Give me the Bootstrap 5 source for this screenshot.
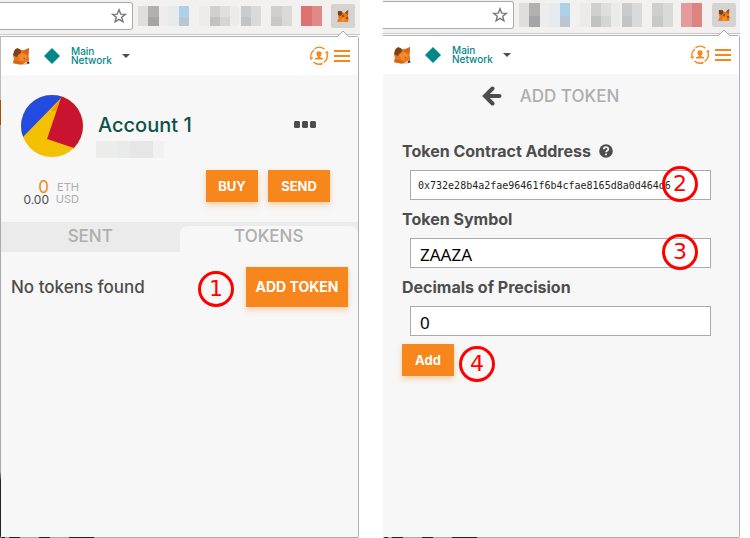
<!DOCTYPE html>
<html lang="en">
<head>
<meta charset="utf-8">
<meta name="viewport" content="width=device-width, initial-scale=1">
<title>Add a token</title>
<link href="https://cdn.jsdelivr.net/npm/bootstrap@5.3.0/dist/css/bootstrap.min.css" rel="stylesheet">
<style>
body{font-family:Inter,"Open Sans",sans-serif;color:#4d4d4d;background:#fff}
button{border:0;padding:0;background:none;color:inherit;flex:none}
svg{display:block;flex:none}
.shots{display:grid;grid-template-columns:360fr 357fr;column-gap:23px;padding-right:10px}
.toolbar{background:#f2f1ef;border-bottom:1px solid #c8c8c8;height:35px;padding:2px 5px 4px 0}
.toolbar.upper{height:34px;padding-top:1px;padding-right:4px}
.urlbox{background:#fff;border:1px solid #aaa;border-left:0;border-radius:0 3px 3px 0;margin-right:5px;padding-right:5px;height:28px}
.urlbox input{border:0;outline:0;background:none;width:100%;min-width:0;height:24px}
.ext{width:24px;height:24px;background:#d4d3d1;border-radius:2px;margin-left:9px}
.upper .ext{margin-left:9px}
.popup{margin:1px 1px 0 0;border:1px solid #b0b0b0;border-radius:0 3px 2px 2px;background:#f7f7f7}
.popup.first{border-left:0;padding-left:1px;border-bottom:0;padding-bottom:1px;
background:linear-gradient(90deg,#222 0 5px,#aaa 5px 9px,#222 9px 20px,#aaa 20px 39px,#222 39px 50px,#aaa 50px 69px,#222 69px 94px,#aaa 94px) bottom/100% 1px no-repeat,
linear-gradient(#bbb 0 63px,#a85000 63px 88px,#aaa 88px 434px,#222 444px) left/1px 100% no-repeat,#f7f7f7}
.popup.second{border-left:0;margin-right:0;border-bottom:0;padding-bottom:1px;background:linear-gradient(90deg,#222 0 5px,#aaa 5px 9px,#222 9px 20px,#aaa 20px 39px,#222 39px 50px,#aaa 50px 69px,#222 69px 94px,#aaa 94px) bottom/100% 1px no-repeat,#f7f7f7}
.notch{position:absolute;top:-7px;right:9px}
.head{height:38px;background:#fff;padding:0 8px 0 11px}
.second .head{padding-left:10px}
.netpick{gap:10px;margin-left:13px}
.swapper{margin-right:5px}
.net{font-size:10px;line-height:9px;color:#038789;text-align:left;font-weight:500}
.acct{padding:20px 28px 16px 20px}
.who{padding-top:18px;margin-left:13px}
.acct-name{font-size:20px;line-height:24px;font-weight:500;color:#0d5249;margin:0;padding-left:2px}
.dots{margin:0 13px 4px auto}
.money{margin-top:12px}
.bal{display:grid;grid-template-columns:28px 25px;column-gap:5px;text-align:right;padding-top:11px;font-size:11px;line-height:12px;color:#aeaeae}
.bal .eth{font-size:17px;color:#f7861c}
.bal .low{line-height:13px}
.bal .usd{color:#4d4d4d;font-size:12px}
.btn.act{--bs-btn-color:#fff;--bs-btn-bg:#f7861c;--bs-btn-hover-color:#fff;--bs-btn-hover-bg:#e87a12;--bs-btn-border-width:0;--bs-btn-border-radius:0;--bs-btn-font-size:13px;--bs-btn-font-weight:700;--bs-btn-padding-x:0;--bs-btn-padding-y:0;--bs-btn-line-height:20px;height:32px;width:52px;box-shadow:0 3px 6px rgba(247,134,28,.36)}
.btn.send{width:62px;margin-left:10px}
.btn.addtok{width:102px;height:40px;margin-left:12px;--bs-btn-font-size:14px}
.tabs{background:#ebebeb;height:30px;font-size:17px;line-height:20px;color:#aeaeae}
.tabs button{flex:1 1 0;font-weight:500;padding-bottom:2px}
.tabs .on{margin-top:4px;background:#f7f7f7;border-radius:8px 8px 0 0;padding-bottom:6px}
.listing{padding:15px 10px;font-size:17px;line-height:20px;font-weight:500}
.step{width:36px;height:36px;border:3px solid #f00;border-radius:50%;color:#f00;font:22px/30px "DejaVu Sans",sans-serif;text-align:center;flex:none}
.step.over{position:absolute;top:-4px;right:13px}
.topline{padding:11px 21px 0 0;gap:18px}
.title{font-size:17px;line-height:22px;color:#aeaeae;font-weight:500;margin:0}
.tokform{padding:32px 28px 0 19px}
.tokform label{font-size:16px;line-height:24px;font-weight:700}
.field{margin:7px 0 7px 8px}
.field input{display:block;width:100%;height:30px;border:1px solid #aaa;border-radius:0;background:#fff;color:#000;padding:3px 9px 0;font:17px "Noto Sans",sans-serif;outline:0}
.field input.mono{font:10px "DejaVu Sans Mono",monospace;padding:0 7px;color:#222}
.submit{gap:5px;padding-top:1px}
.submit .step{margin-top:2px}
</style>
<script src="https://cdn.jsdelivr.net/npm/bootstrap@5.3.0/dist/js/bootstrap.bundle.min.js"></script>
</head>
<body>
<svg width="0" height="0" class="position-absolute" aria-hidden="true">
<symbol id="star" viewBox="0 0 16 16"><path d="M8 1.800l1.700 4.300 4.600.3-3.600 2.900 1.200 4.500L8 11.300l-3.900 2.500 1.200-4.500L1.700 6.400l4.600-.3z" fill="none" stroke="#777" stroke-width="1.400"/></symbol>
<symbol id="fox" viewBox="0 0 18 18"><path d="M1 8l2-6 5 1h4l5-2-.5 7 .5 4v3l-2 2-6 .5-8-1.200L2 13z" fill="#e8761f"/><path d="M1.200 8L2 4l3-3 3.500 1.500.5 3L6 8 5 10 1.500 8.500z" fill="#7a421c"/><path d="M10.500 5L17 1l-.6 7-3-1z" fill="#d5651b"/><path d="M6 8.500l5-2.500 4.500 3-2 4-5 1z" fill="#f58a2a"/><path d="M1.500 13l7 1.500 3 2.500-4 .5-6-1.500z" fill="#d26716"/><path d="M12 16l3.500-1.500L17 16l-1.500 1.500-4 .2z" fill="#d8c5b5"/><path d="M15 15h2.300v1.700H15z" fill="#333"/><path d="M11 11l2.300.4-.6.8z" fill="#5c2d12"/></symbol>
<symbol id="minifox" viewBox="0 0 14 14"><path d="M1.500 4l2-2 3 1.500 2 .5L12 1l.5 1-.5 5 .8 3-1 3-4.500-.2L1 13l1.500-4z" fill="#e87817"/><path d="M2 2l4 .3.5 3L4 7 2 5.500z" fill="#70401d"/><path d="M9 3.500L12 1l-.5 5z" fill="#944b1b"/><path d="M6 6h2v2H6zM10 8h2v2h-2z" fill="#9c5015"/><path d="M7 9l3 1-2 2-3-.5z" fill="#ff9630"/></symbol>
<symbol id="swap" viewBox="0 0 20 20"><g fill="none" stroke="#f7861c" stroke-width="1.400"><path d="M5.500 2.800A8.300 8.300 0 0 1 15.500 3.200"/><path d="M5 4A8.300 8.300 0 0 0 1.900 11.500"/><path d="M18 7.500A8.300 8.300 0 0 1 14.500 16.500"/><path d="M13.500 17.500A8.300 8.300 0 0 1 4.500 16"/></g><path d="M.2 11.500l4-.3-1.700 3zM16 7.500l2-3 2 3z" fill="#f7861c"/><path d="M10 5.300a2.500 2.500 0 0 1 2.500 2.600c0 1.400-.7 2.200-1.400 2.700v.6l2.900 1v1.300H6v-1.300l2.900-1v-.6c-.7-.5-1.400-1.300-1.400-2.700A2.500 2.500 0 0 1 10 5.300z" fill="#f7861c"/></symbol>
<symbol id="bars" viewBox="0 0 16 12"><path d="M0 1h16M0 6h16M0 11h16" stroke="#f7861c" stroke-width="2"/></symbol>
<symbol id="peak" viewBox="0 0 12 8"><path d="M0 8L0 7 6 1l6 6v1z" fill="#fff"/><path d="M0 7L6 1l6 6" fill="none" stroke="#aaa"/></symbol>
<symbol id="blur" viewBox="0 0 184 20" preserveAspectRatio="none"><g shape-rendering="crispEdges"><path fill="#dedede" d="M0 0h10v20H0z"/><path fill="#b2b1b0" d="M10 0h11v11H10z"/><path fill="#a5a5a5" d="M10 11h11v9H10z"/><path fill="#ededed" d="M21 0h9v20h-9z"/><path fill="#e8ebed" d="M30 0h11v20H30z"/><path fill="#aed1eb" d="M41 0h10v11H41z"/><path fill="#b9c7d3" d="M41 11h10v9H41z"/><path fill="#ebebea" d="M61 0h10v20H61z"/><path fill="#d0d0cf" d="M72 0h10v11H72z"/><path fill="#c2c2c2" d="M72 11h10v9H72z"/><path fill="#dfdfde" d="M82 0h10v11H82z"/><path fill="#d5d5d4" d="M82 11h10v9H82z"/><path fill="#ebebea" d="M92 0h9v20h-9z"/><path fill="#c9cbcd" d="M103 0h10v11h-10z"/><path fill="#c2c4c6" d="M103 11h10v9h-10z"/><path fill="#dadada" d="M113 0h10v20h-10z"/><path fill="#cfcfcd" d="M133 0h11v11h-11z"/><path fill="#c8c8c6" d="M133 11h11v9h-11z"/><path fill="#dadad8" d="M144 0h10v20h-10z"/></g></symbol>
</svg>
<main class="shots min-vh-100">
<section class="d-flex flex-column">
<div class="toolbar d-flex align-items-center">
<div class="urlbox d-flex align-items-center flex-grow-1"><input type="text" aria-label="Address"><button type="button" aria-label="Bookmark"><svg width="16" height="16"><use href="#star"/></svg></button></div>
<svg width="184" height="20"><use href="#blur" width="184" height="20"/><path fill="#dd7371" d="M163 0h11v20h-11z"/><path fill="#e08a88" d="M174 0h10v20h-10z"/></svg>
<button type="button" class="ext d-flex align-items-center justify-content-center" aria-label="Wallet"><svg width="14" height="14"><use href="#minifox"/></svg></button>
</div>
<div class="popup first flex-grow-1 position-relative">
<svg class="notch" width="12" height="8"><use href="#peak"/></svg>
<header class="head d-flex align-items-center">
<svg width="18" height="18"><use href="#fox"/></svg>
<button type="button" class="netpick d-flex align-items-center" aria-label="Choose network"><svg width="18" height="18" viewBox="0 0 18 18"><path d="M9 1l8 8-8 8-8-8z" fill="#038789"/></svg><span class="net">Main<br>Network</span><svg width="8" height="4" viewBox="0 0 8 4"><path d="M0 0h8L4 4z" fill="#4d4d4d"/></svg></button>
<button type="button" class="swapper ms-auto" aria-label="Switch account"><svg width="20" height="20"><use href="#swap"/></svg></button>
<button type="button" aria-label="Menu"><svg width="16" height="12"><use href="#bars"/></svg></button>
</header>
<div class="acct">
<div class="d-flex">
<svg width="62" height="62" viewBox="0 0 62 62"><clipPath id="disc"><circle cx="31" cy="31" r="31"/></clipPath><g clip-path="url(#disc)"><path fill="#f3c004" d="M0 0h62v62H0z"/><path fill="#234ae1" d="M0 0h43L0 44z"/><path fill="#fb9a04" d="M41 2l-3 14h-8z"/><path fill="#c8142f" d="M41 0h21v56L26 44z"/></g></svg>
<div class="who"><h1 class="acct-name">Account 1</h1><svg class="mt-1" width="68" height="17" shape-rendering="crispEdges"><path fill="#ececeb" d="M0 0h34v17H0z"/><path fill="#e9ebea" d="M22 0h12v17H22z"/><path fill="#e6e6e6" d="M34 0h23v17H34z"/><path fill="#f1f1f1" d="M57 0h11v17H57z"/></svg></div>
<button type="button" class="dots" aria-label="Account options"><svg width="24" height="8"><path d="M2 0h4l1 1v5l-1 1H2L1 6V1zM10 0h4l1 1v5l-1 1h-4l-1-1V1zM18 0h4l1 1v5l-1 1h-4l-1-1V1z" fill="#4d4d4d"/></svg></button>
</div>
<div class="money d-flex">
<div class="bal"><span class="eth">0</span><span>ETH</span><span class="usd low">0.00</span><span class="low">USD</span></div>
<button type="button" class="btn act ms-auto">BUY</button>
<button type="button" class="btn act send">SEND</button>
</div>
</div>
<div class="tabs d-flex"><button type="button">SENT</button><button type="button" class="on">TOKENS</button></div>
<div class="listing d-flex align-items-center"><span>No tokens found</span><span class="step ms-auto mt-1">1</span><button type="button" class="btn act addtok">ADD TOKEN</button></div>
</div>
</section>
<section class="d-flex flex-column">
<div class="toolbar upper d-flex align-items-center">
<div class="urlbox d-flex align-items-center flex-grow-1"><input type="text" aria-label="Address"><button type="button" aria-label="Bookmark"><svg width="16" height="16"><use href="#star"/></svg></button></div>
<svg width="184" height="24"><use href="#blur" width="184" height="24"/><path fill="#e39c9b" d="M162 0h11v24h-11z"/><path fill="#de837f" d="M173 0h10v24h-10z"/></svg>
<button type="button" class="ext d-flex align-items-center justify-content-center" aria-label="Wallet"><svg width="14" height="14"><use href="#minifox"/></svg></button>
</div>
<div class="popup second flex-grow-1 position-relative">
<svg class="notch" width="12" height="8"><use href="#peak"/></svg>
<header class="head d-flex align-items-center">
<svg width="18" height="18"><use href="#fox"/></svg>
<button type="button" class="netpick d-flex align-items-center" aria-label="Choose network"><svg width="18" height="18" viewBox="0 0 18 18"><path d="M9 1l8 8-8 8-8-8z" fill="#038789"/></svg><span class="net">Main<br>Network</span><svg width="8" height="4" viewBox="0 0 8 4"><path d="M0 0h8L4 4z" fill="#4d4d4d"/></svg></button>
<button type="button" class="swapper ms-auto" aria-label="Switch account"><svg width="20" height="20"><use href="#swap"/></svg></button>
<button type="button" aria-label="Menu"><svg width="16" height="12"><use href="#bars"/></svg></button>
</header>
<div class="topline d-flex align-items-center justify-content-center">
<button type="button" aria-label="Back"><svg width="20" height="20" viewBox="0 0 20 20"><path d="M10.500 2.500L3 10l7.500 7.500M4 10h13.500" fill="none" stroke="#4d4d4d" stroke-width="4" stroke-linecap="round" stroke-linejoin="miter"/></svg></button>
<h2 class="title">ADD TOKEN</h2>
</div>
<form class="tokform">
<label for="addr" class="d-flex align-items-center gap-2">Token Contract Address <svg width="14" height="14" viewBox="0 0 14 14"><circle cx="7" cy="7" r="6.800" fill="#4d4d4d"/><path d="M4.700 5.300C4.800 2.400 9.400 2.500 9.300 5.100 9.200 6.700 7.200 6.600 7.100 8.300" fill="none" stroke="#f7f7f7" stroke-width="1.800"/><path d="M6.100 9.400H8v1.800H6.100z" fill="#f7f7f7"/></svg></label>
<div class="field position-relative"><input id="addr" class="mono" type="text" value="0x732e28b4a2fae96461f6b4cfae8165d8a0d464d6"><span class="step over">2</span></div>
<label for="sym" class="d-block">Token Symbol</label>
<div class="field position-relative"><input id="sym" type="text" value="ZAAZA"><span class="step over">3</span></div>
<label for="dec" class="d-block">Decimals of Precision</label>
<div class="field"><input id="dec" type="text" value="0"></div>
<div class="submit d-flex align-items-start"><button type="button" class="btn act">Add</button><span class="step">4</span></div>
</form>
</div>
</section>
</main>
</body>
</html>
